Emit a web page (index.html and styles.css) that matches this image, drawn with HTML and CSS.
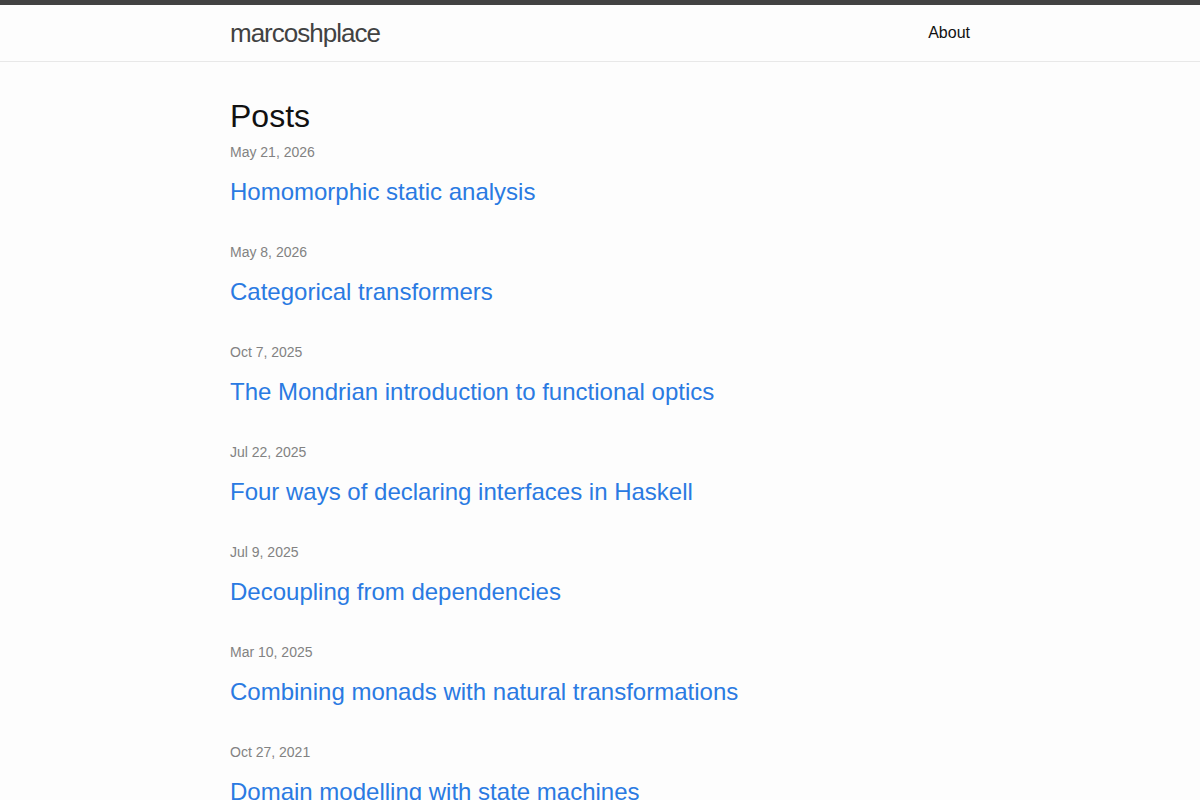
FILE: index.html
```html
<!DOCTYPE html>
<html lang="en">
<head>
  <meta charset="UTF-8">
  <meta name="viewport" content="width=device-width, initial-scale=1.0">
  <title>marcoshplace</title>
  <link rel="stylesheet" href="styles.css">
</head>
<body>

  <header class="site-header">
    <div class="wrapper">
      <a class="site-title" href="/">marcoshplace</a>
      <nav class="site-nav">
        <a class="page-link" href="/about/">About</a>
      </nav>
    </div>
  </header>

  <main class="page-content">
    <div class="wrapper">
      <h2 class="post-list-heading">Posts</h2>

      <!-- Liste des articles -->
      <ul class="post-list">
        <li>
          <span class="post-meta">May 21, 2026</span>
          <h3><a class="post-link" href="#">Homomorphic static analysis</a></h3>
        </li>
        <li>
          <span class="post-meta">May 8, 2026</span>
          <h3><a class="post-link" href="#">Categorical transformers</a></h3>
        </li>
        <li>
          <span class="post-meta">Oct 7, 2025</span>
          <h3><a class="post-link" href="#">The Mondrian introduction to functional optics</a></h3>
        </li>
        <li>
          <span class="post-meta">Jul 22, 2025</span>
          <h3><a class="post-link" href="#">Four ways of declaring interfaces in Haskell</a></h3>
        </li>
        <li>
          <span class="post-meta">Jul 9, 2025</span>
          <h3><a class="post-link" href="#">Decoupling from dependencies</a></h3>
        </li>
        <li>
          <span class="post-meta">Mar 10, 2025</span>
          <h3><a class="post-link" href="#">Combining monads with natural transformations</a></h3>
        </li>
        <li>
          <span class="post-meta">Oct 27, 2021</span>
          <h3><a class="post-link" href="#">Domain modelling with state machines</a></h3>
        </li>
      </ul>
    </div>
  </main>

</body>
</html>
```

FILE: styles.css
```css
body {
  margin: 0;
  padding: 0;
  font-family: "Liberation Sans", Arial, sans-serif;
  font-size: 16px;
  line-height: 1.5;
  color: #111;
  background-color: #fdfdfd;
}
a {
  text-decoration: none;
}
.wrapper {
  max-width: 740px;
  margin: 0 auto;
  padding: 0 30px;
}
.site-header {
  border-top: 5px solid #424242;
  border-bottom: 1px solid #e8e8e8;
  height: 56px;
  box-sizing: content-box;
}
.site-header .wrapper {
  display: flex;
  justify-content: space-between;
  align-items: center;
  height: 56px;
}
.site-title {
  font-size: 26px;
  font-weight: 300;
  letter-spacing: -1px;
  line-height: 54px;
  color: #424242;
}
.page-link {
  color: #111;
  line-height: 1.5;
}
.page-content {
  padding: 30px 0;
}
.post-list-heading {
  font-size: 32px;
  font-weight: normal;
  line-height: 48px;
  margin: 0 0 2px;
}
.post-list {
  margin: 0;
  padding: 0;
  list-style-type: none;
}
.post-list li {
  margin-bottom: 32px;
}
.post-meta {
  display: block;
  font-size: 14px;
  line-height: 21px;
  color: #828282;
}
.post-list h3 {
  margin: 11px 0 0;
  font-weight: normal;
  line-height: 36px;
}
.post-link {
  display: block;
  font-size: 24px;
  color: #2a7ae2;
}
```
